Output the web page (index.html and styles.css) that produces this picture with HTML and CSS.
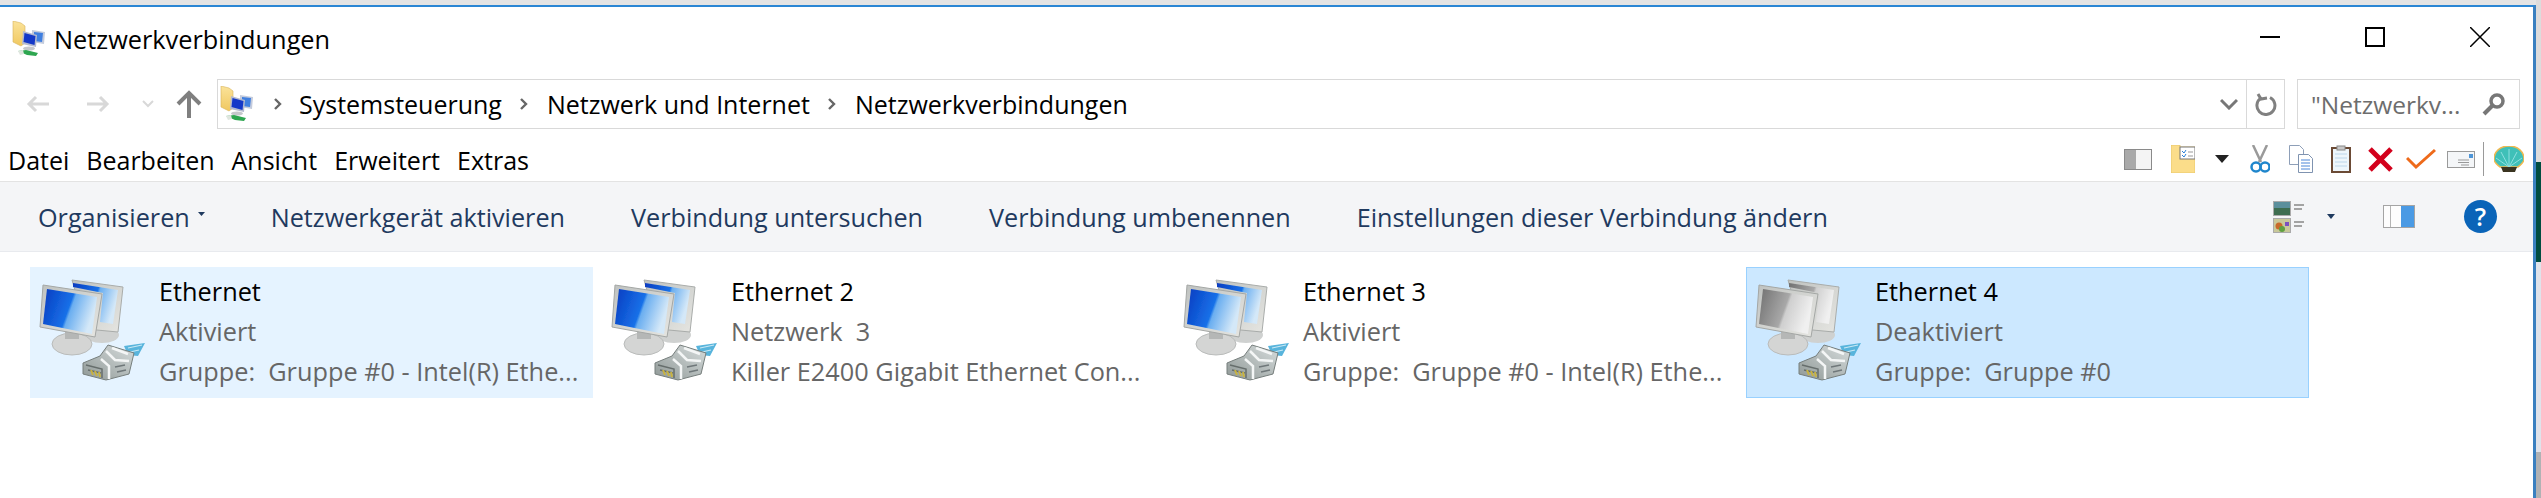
FILE: index.html
```html
<!DOCTYPE html>
<html lang="de">
<head>
  <meta charset="UTF-8">
  <title>Netzwerkverbindungen</title>
  <link rel="stylesheet" href="styles.css">
</head>
<body>
  <!-- shared icon parts -->
  <svg class="defs" width="0" height="0">
    <defs>
      <filter id="soft"><feGaussianBlur stdDeviation="0.6"/></filter>
      <linearGradient id="blueScreen" x1="0" y1="0" x2="1" y2="0.3">
        <stop offset="0" stop-color="#0a3cc0"/>
        <stop offset="0.55" stop-color="#1670e8"/>
        <stop offset="0.6" stop-color="#6aaef0"/>
        <stop offset="1" stop-color="#d4e8f8"/>
      </linearGradient>
      <linearGradient id="greyScreen" x1="0" y1="0" x2="1" y2="0.3">
        <stop offset="0" stop-color="#707070"/>
        <stop offset="0.55" stop-color="#a8a8a8"/>
        <stop offset="0.6" stop-color="#cfcfcf"/>
        <stop offset="1" stop-color="#f0f0f0"/>
      </linearGradient>
      <linearGradient id="frame" x1="0" y1="0" x2="1" y2="1">
        <stop offset="0" stop-color="#bfc2c0"/>
        <stop offset="1" stop-color="#e6e6e2"/>
      </linearGradient>
      <linearGradient id="plug" x1="0" y1="1" x2="1" y2="0">
        <stop offset="0" stop-color="#8f9896"/>
        <stop offset="1" stop-color="#d6dcdc"/>
      </linearGradient>
      <linearGradient id="folder" x1="0" y1="0" x2="0" y2="1">
        <stop offset="0" stop-color="#fbe39a"/>
        <stop offset="1" stop-color="#f0c860"/>
      </linearGradient>
      <symbol id="netBase" viewBox="0 0 116 116">
        <g filter="url(#soft)">
          <ellipse cx="66" cy="60" rx="17" ry="8" fill="#cfd1d0"/>
          <polygon points="36,5 87,12 82,57 50,54" fill="url(#frame)" stroke="#a9acaa"/>
          <ellipse cx="36" cy="69" rx="20" ry="11" fill="#d4d5d4" stroke="#b9bbba"/>
          <rect x="29" y="56" width="14" height="8" fill="#b5b7b6"/>
          <polygon points="7,10 66,19 59,62 4,52" fill="url(#frame)" stroke="#a4a7a5"/>
          <polygon points="88,71 109,68 102,81 92,80" fill="#58b4dc"/>
          <path d="M92 73l14-3M94 77l9-2" stroke="#c8e8f4" stroke-width="1.200"/>
          <polygon points="47,88 64,81 72,70 98,78 93,99 70,105 47,99" fill="url(#plug)" stroke="#767e7c"/>
          <path d="M70 76l9 9 14 1M65 84l8 7v13M76 73l16 6" stroke="#f4f6f6" stroke-width="2.500" fill="none"/>
          <path d="M79 92l10-2M81 97l9-2" stroke="#70787a" stroke-width="1.500" fill="none"/>
          <path d="M50 90l16 4v9M52 95l13 3" stroke="#666e6c" stroke-width="1.500" fill="none"/>
          <path d="M55 95l2 5M59 96l2 5M63 97l1 5" stroke="#c9b340" stroke-width="2" fill="none"/>
        </g>
      </symbol>
      <symbol id="netBlue" viewBox="0 0 116 116">
        <use href="#netBase"/>
        <g filter="url(#soft)">
          <polygon points="37,8 82,15 77,49 64,47 67,18 37,12" fill="url(#blueScreen)"/>
          <polygon points="11,14 61,22 56,59 7,49" fill="url(#blueScreen)"/>
        </g>
      </symbol>
      <symbol id="netGrey" viewBox="0 0 116 116">
        <use href="#netBase"/>
        <g filter="url(#soft)">
          <polygon points="37,8 82,15 77,49 64,47 67,18 37,12" fill="url(#greyScreen)"/>
          <polygon points="11,14 61,22 56,59 7,49" fill="url(#greyScreen)"/>
        </g>
      </symbol>
      <symbol id="netSmall" viewBox="0 0 36 36">
        <path d="M1 0l8 2 4 3v17l-4 3-8-4z" fill="url(#folder)" stroke="#d6b45c" stroke-width="0.600"/>
        <polygon points="20,9 33,11 32,23 20,21" fill="#c4cbdc"/>
        <polygon points="22,11 31,12 30,21 22,20" fill="#3f7fe0"/>
        <polygon points="11,10 25,14 24,26 10,23" fill="#b4bace"/>
        <polygon points="12.500,12 23.500,15 22.500,24 11.500,21" fill="#1438c8"/>
        <ellipse cx="17" cy="27.500" rx="6" ry="2" fill="#c6c8cc"/>
        <path d="M6 30l8-1 12 3-2 3-9-1z" fill="#2ea650"/>
        <path d="M6 30l5-1 1 4-4 1z" fill="#dfe6df"/>
      </symbol>
    </defs>
  </svg>

  <div class="window">
    <header class="titlebar">
      <svg class="small-icon" width="36" height="36"><use href="#netSmall"/></svg>
      <span class="title">Netzwerkverbindungen</span>
      <div class="controls">
        <svg width="20" height="20" viewBox="0 0 20 20"><path d="M0 10h20" stroke="#000" stroke-width="2"/></svg>
        <svg width="20" height="20" viewBox="0 0 20 20"><rect x="1" y="1" width="18" height="18" fill="none" stroke="#000" stroke-width="2"/></svg>
        <svg width="20" height="20" viewBox="0 0 20 20"><path d="M0 0l20 20M20 0L0 20" stroke="#000" stroke-width="1.500"/></svg>
      </div>
    </header>

    <div class="navbar">
      <div class="nav-buttons">
        <svg width="24" height="18" viewBox="0 0 24 18"><path d="M23 9H3M10 2L3 9l7 7" fill="none" stroke="#d8d8d8" stroke-width="3"/></svg>
        <svg width="24" height="18" viewBox="0 0 24 18"><path d="M1 9h20M14 2l7 7-7 7" fill="none" stroke="#d8d8d8" stroke-width="3"/></svg>
        <svg width="12" height="8" viewBox="0 0 12 8"><path d="M1 1l5 5 5-5" fill="none" stroke="#d8d8d8" stroke-width="2"/></svg>
        <svg width="26" height="28" viewBox="0 0 26 28"><path d="M13 28V4M2 14L13 3l11 11" fill="none" stroke="#7f7f7f" stroke-width="4"/></svg>
      </div>
      <div class="address">
        <svg class="small-icon" width="36" height="36"><use href="#netSmall"/></svg>
        <svg class="crumb-sep" width="10" height="12" viewBox="0 0 10 12"><path d="M2 1l5 5-5 5" fill="none" stroke="#666" stroke-width="2.400"/></svg>
        <span>Systemsteuerung</span>
        <svg class="crumb-sep" width="10" height="12" viewBox="0 0 10 12"><path d="M2 1l5 5-5 5" fill="none" stroke="#666" stroke-width="2.400"/></svg>
        <span>Netzwerk und Internet</span>
        <svg class="crumb-sep" width="10" height="12" viewBox="0 0 10 12"><path d="M2 1l5 5-5 5" fill="none" stroke="#666" stroke-width="2.400"/></svg>
        <span>Netzwerkverbindungen</span>
        <svg class="address-drop" width="18" height="12" viewBox="0 0 18 12"><path d="M1 2l8 8 8-8" fill="none" stroke="#777" stroke-width="3"/></svg>
        <div class="refresh">
          <svg width="22" height="24" viewBox="0 0 22 24"><path d="M6 6a9 9 0 1 0 9-.5M3 2l3 5 6-1" fill="none" stroke="#808080" stroke-width="3"/></svg>
        </div>
      </div>
      <div class="search">
        <span>"Netzwerkv...</span>
        <svg width="24" height="24" viewBox="0 0 24 24"><circle cx="15" cy="9" r="6" fill="none" stroke="#777" stroke-width="3.500"/><path d="M10 14l-8 8" stroke="#777" stroke-width="4"/></svg>
      </div>
    </div>

    <div class="menubar">
      <span>Datei</span>
      <span>Bearbeiten</span>
      <span>Ansicht</span>
      <span>Erweitert</span>
      <span>Extras</span>
      <div class="menu-icons">
        <svg class="ic-layout" width="28" height="21" viewBox="0 0 28 21"><rect x="0.500" y="0.500" width="27" height="20" fill="#f4f4f4" stroke="#8a8a8a"/><rect x="1" y="1" width="11" height="19" fill="#a9a9a9"/></svg>
        <svg class="ic-folder" width="24" height="28" viewBox="0 0 24 28"><path d="M0 0h9v2h15v26H0z" fill="#fbdd8a" stroke="#e7c465" stroke-width="0.800"/><rect x="9" y="2" width="15" height="12" fill="#fff" stroke="#777"/><path d="M11 6l2 2 2-3M11 10l2 2 2-3" fill="none" stroke="#2a7fd6"/><path d="M17 7h5M17 11h5" stroke="#999"/></svg>
        <svg class="ic-drop" width="14" height="8" viewBox="0 0 14 8"><path d="M0 0h14L7 8z" fill="#222"/></svg>
        <svg class="ic-cut" width="20" height="28" viewBox="0 0 20 28"><path d="M3 0l8 17M17 0L9 17" stroke="#9a9a9a" stroke-width="2.500"/><circle cx="6" cy="22" r="4.500" fill="none" stroke="#1f86cc" stroke-width="2.500"/><circle cx="15" cy="22" r="4.500" fill="none" stroke="#1f86cc" stroke-width="2.500"/></svg>
        <svg class="ic-copy" width="24" height="28" viewBox="0 0 24 28"><path d="M0.500 0.500h10l4 4v15h-14z" fill="#fff" stroke="#8e9fb8"/><path d="M9.500 9.500h10l4 4v14h-14z" fill="#fff" stroke="#7f93b0"/><path d="M12 15h9M12 18h9M12 21h9M12 24h9" stroke="#4a86d8"/></svg>
        <svg class="ic-paste" width="20" height="28" viewBox="0 0 20 28"><rect x="1" y="3" width="18" height="24" fill="#eef6fb" stroke="#6b4a35" stroke-width="2"/><path d="M4 9h12M4 13h12M4 17h12M4 21h12" stroke="#bcd6ea"/><rect x="6" y="1" width="8" height="4" fill="#c9c9c9" stroke="#888"/></svg>
        <svg class="ic-x" width="25" height="25" viewBox="0 0 25 25"><path d="M2 2l21 21M23 2L2 23" stroke="#d3001c" stroke-width="5"/></svg>
        <svg class="ic-check" width="30" height="22" viewBox="0 0 30 22"><path d="M1 10l9 9L29 2" fill="none" stroke="#ee6a1a" stroke-width="3"/></svg>
        <svg class="ic-mail" width="28" height="17" viewBox="0 0 28 17"><rect x="0.500" y="0.500" width="27" height="16" fill="#f4f6f8" stroke="#9a9a9a"/><rect x="22" y="3" width="4" height="4" fill="#4f96d8"/><path d="M11 9h11M11 11.500h11M14 14h8" stroke="#999"/></svg>
        <span class="menu-sep"></span>
        <svg class="ic-shell" width="30" height="27" viewBox="0 0 30 27"><path d="M15 0c9 0 15 6 15 13 0 4-4 6-6 8H6c-2-2-6-4-6-8C0 6 6 0 15 0z" fill="#3fc0b8" stroke="#f0b850" stroke-width="1.500"/><path d="M15 21V3M15 21L7 6M15 21l8-15M15 21L2 12M15 21l13-9" stroke="#8fe0e0"/><path d="M7 21h16l-2 5H9z" fill="#3a3420"/></svg>
      </div>
    </div>

    <div class="toolbar">
      <button class="tool has-arrow">Organisieren<svg width="7" height="4" viewBox="0 0 7 4"><path d="M0 0h7L3.500 4z" fill="#1f3a5f"/></svg></button>
      <button class="tool">Netzwerkgerät aktivieren</button>
      <button class="tool">Verbindung untersuchen</button>
      <button class="tool">Verbindung umbenennen</button>
      <button class="tool">Einstellungen dieser Verbindung ändern</button>
      <div class="tool-icons">
        <svg class="ic-view" width="32" height="32" viewBox="0 0 32 32"><rect x="0.500" y="0.500" width="17" height="14" fill="#5b8f9c" stroke="#aaa"/><rect x="1" y="7" width="16" height="7" fill="#3e6d50"/><rect x="0.500" y="17.500" width="17" height="14" fill="#c8c89a" stroke="#aaa"/><circle cx="6" cy="25" r="3.500" fill="#c86a2a"/><circle cx="9" cy="28" r="3" fill="#5fa040"/><rect x="12" y="21" width="4" height="4" fill="#7a50c0"/><path d="M21 4h10M21 8h8M21 21h10M21 25h8" stroke="#888" stroke-width="1.500"/></svg>
        <svg class="ic-viewdrop" width="8" height="5" viewBox="0 0 8 5"><path d="M0 0h8L4 5z" fill="#1f3a5f"/></svg>
        <svg class="ic-pane" width="32" height="23" viewBox="0 0 32 23"><rect x="0.500" y="0.500" width="31" height="22" fill="#fdfdfd" stroke="#a4a4a4"/><rect x="18" y="1" width="13" height="21" fill="#4a9ae4"/><path d="M7.500 1v21" stroke="#b4b4b4"/></svg>
        <span class="ic-help">?</span>
      </div>
    </div>

    <main class="items">
      <div class="item hover">
        <svg class="net-icon" width="116" height="116"><use href="#netBlue"/></svg>
        <div class="info">
          <span class="name">Ethernet</span>
          <span>Aktiviert</span>
          <span>Gruppe:&nbsp; Gruppe #0 - Intel(R) Ethe...</span>
        </div>
      </div>
      <div class="item">
        <svg class="net-icon" width="116" height="116"><use href="#netBlue"/></svg>
        <div class="info">
          <span class="name">Ethernet 2</span>
          <span>Netzwerk&nbsp; 3</span>
          <span>Killer E2400 Gigabit Ethernet Con...</span>
        </div>
      </div>
      <div class="item">
        <svg class="net-icon" width="116" height="116"><use href="#netBlue"/></svg>
        <div class="info">
          <span class="name">Ethernet 3</span>
          <span>Aktiviert</span>
          <span>Gruppe:&nbsp; Gruppe #0 - Intel(R) Ethe...</span>
        </div>
      </div>
      <div class="item selected">
        <svg class="net-icon" width="116" height="116"><use href="#netGrey"/></svg>
        <div class="info">
          <span class="name">Ethernet 4</span>
          <span>Deaktiviert</span>
          <span>Gruppe:&nbsp; Gruppe #0</span>
        </div>
      </div>
    </main>
  </div>
  <div class="edge"></div>
</body>
</html>
```

FILE: styles.css
```css
html, body {
  margin: 0;
  height: 100%;
  overflow: hidden;
}
body {
  display: flex;
  background-color: #e4e4e4;
  padding-top: 5px;
  box-sizing: border-box;
  font-family: "Open Sans", "Noto Sans", sans-serif;
  font-size: 25.3px;
  color: #000;
}
.defs {
  position: absolute;
}
svg {
  display: block;
  flex: none;
}
.window {
  flex: 1;
  min-width: 0;
  background-color: #fff;
  border-top: 2px solid #2b86d4;
  border-right: 3px solid #3a80c0;
  display: flex;
  flex-direction: column;
}
.edge {
  width: 5px;
  margin-top: -5px;
  background: linear-gradient(#dcdcdc 162px, #004d40 162px, #004d40 262px, #dfe3ea 262px, #dfe3ea 452px, #b0b2b4 452px);
}

.titlebar {
  height: 72px;
  display: flex;
  align-items: center;
  padding: 0 0 8px 12px;
  box-sizing: border-box;
}
.title {
  margin-left: 6px;
}
.controls {
  margin: 0 43px 4px auto;
  display: flex;
  gap: 85px;
}

.navbar {
  height: 50px;
  display: flex;
  align-items: stretch;
  padding: 0 13px 0 26px;
  font-size: 25px;
}
.nav-buttons {
  display: flex;
  align-items: center;
  gap: 14px;
  width: 191px;
  flex: none;
}
.nav-buttons svg:nth-child(2) {
  margin-left: 22px;
}
.nav-buttons svg:nth-child(3) {
  margin-left: 18px;
}
.nav-buttons svg:nth-child(4) {
  margin-left: 8px;
}
.address {
  flex: 1;
  display: flex;
  align-items: center;
  border: 1px solid #d9d9d9;
  padding-left: 2px;
}
.crumb-sep {
  margin: 0 18px 0 17px;
}
.address > .small-icon + .crumb-sep {
  margin: 0 16px 0 17px;
}
.address-drop {
  margin-left: auto;
  margin-right: 8px;
}
.refresh {
  width: 37px;
  align-self: stretch;
  border-left: 1px solid #d9d9d9;
  display: flex;
  align-items: center;
  justify-content: center;
}
.search {
  width: 223px;
  margin-left: 12px;
  box-sizing: border-box;
  border: 1px solid #d9d9d9;
  display: flex;
  align-items: center;
  justify-content: space-between;
  padding: 0 13px;
  color: #6d6d6d;
  font-size: 24.5px;
}

.menubar {
  height: 52px;
  display: flex;
  align-items: center;
  gap: 17px;
  padding: 10px 9px 0 8px;
  box-sizing: border-box;
  font-size: 25px;
}
.menu-icons {
  margin-left: auto;
  display: flex;
  align-items: center;
  margin-top: -2px;
}
.ic-folder { margin-left: 19px; }
.ic-drop { margin-left: 20px; }
.ic-cut { margin-left: 21px; }
.ic-copy { margin-left: 19px; }
.ic-paste { margin-left: 18px; }
.ic-x { margin-left: 17px; }
.ic-check { margin-left: 13px; }
.ic-mail { margin-left: 11px; }
.ic-shell { margin-left: 10px; }
.menu-sep {
  width: 1px;
  height: 34px;
  margin-left: 8px;
  background-color: #9a9a9a;
}

.toolbar {
  height: 71px;
  box-sizing: border-box;
  background-color: #f4f5f7;
  border-top: 1px solid #e3e3e3;
  border-bottom: 1px solid #e8eaee;
  display: flex;
  align-items: center;
  padding: 0 36px 0 38px;
  gap: 66px;
  font-size: 25.2px;
}
.tool {
  border: none;
  background: none;
  padding: 0;
  font: inherit;
  color: #1f3a5f;
  display: flex;
  align-items: center;
}
.has-arrow svg {
  margin: -6px 0 0 8px;
}
.tool-icons {
  margin-left: auto;
  display: flex;
  align-items: center;
}
.ic-viewdrop { margin-left: 22px; }
.ic-pane { margin-left: 48px; }
.ic-help {
  margin-left: 49px;
  width: 33px;
  height: 33px;
  border-radius: 50%;
  background-color: #0a64b8;
  color: #fff;
  font-size: 25px;
  font-weight: 600;
  line-height: 33px;
  text-align: center;
}

.items {
  flex: 1;
  display: flex;
  align-items: flex-start;
  gap: 9px;
  padding: 15px 0 0 30px;
}
.item {
  width: 563px;
  height: 131px;
  box-sizing: border-box;
  border: 1px solid transparent;
  display: flex;
  align-items: center;
  padding-left: 5px;
  gap: 7px;
  color: #666;
}
.item.hover {
  background-color: #e5f3ff;
  border-color: #e5f3ff;
}
.item.selected {
  background-color: #cce8ff;
  border-color: #99d1ff;
}
.info {
  display: flex;
  flex-direction: column;
  line-height: 40px;
  white-space: nowrap;
  margin-top: -3px;
}
.name {
  color: #000;
}
```
